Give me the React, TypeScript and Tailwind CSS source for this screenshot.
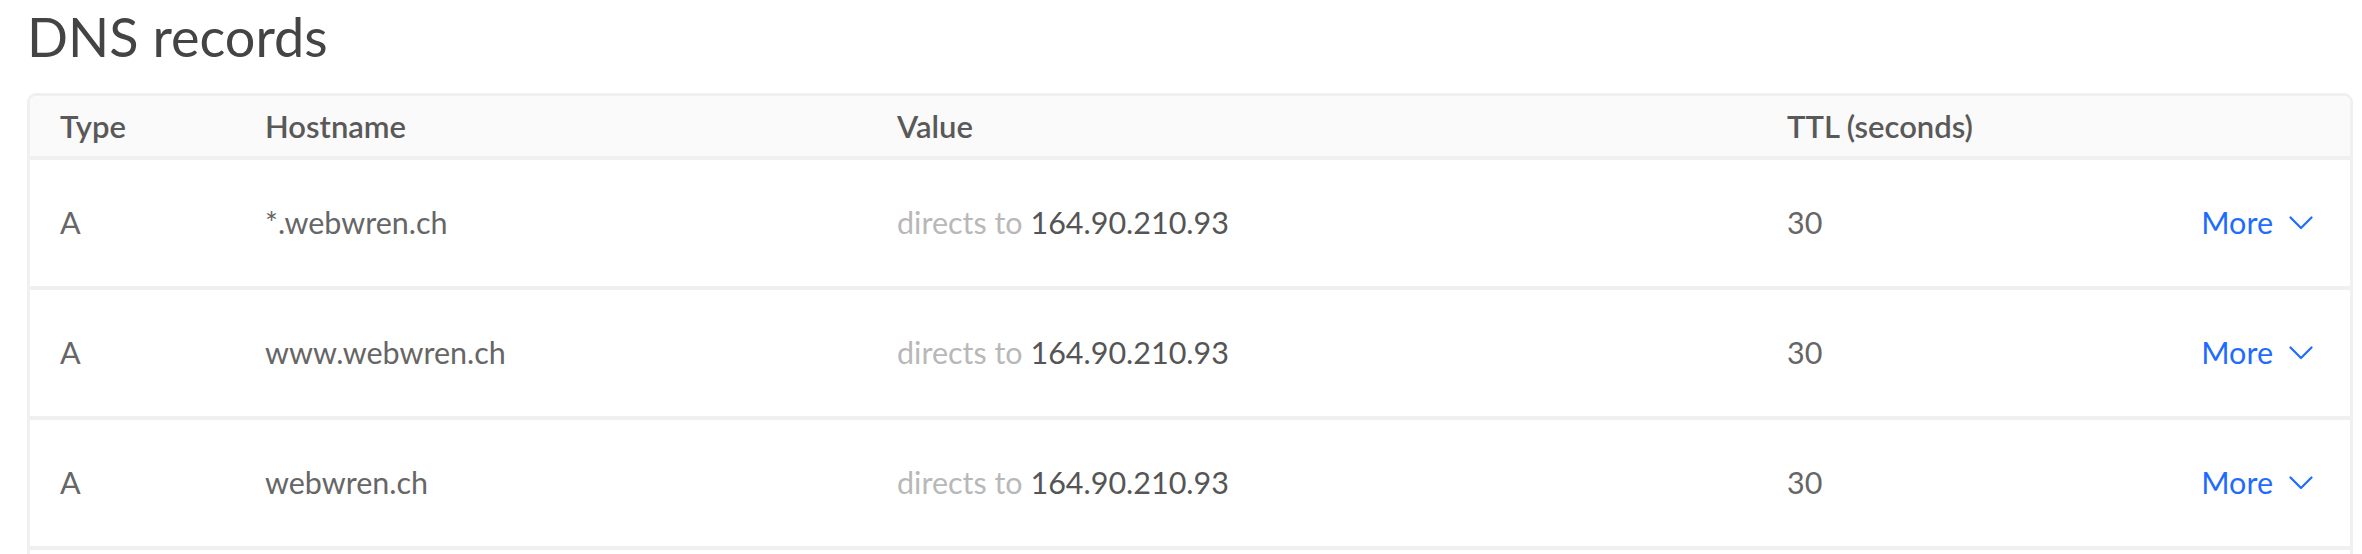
type DnsRecord = {
  type: string;
  hostname: string;
  value: string;
  ttl: number;
};

const records: DnsRecord[] = [
  { type: "A", hostname: "*.webwren.ch", value: "164.90.210.93", ttl: 30 },
  { type: "A", hostname: "www.webwren.ch", value: "164.90.210.93", ttl: 30 },
  { type: "A", hostname: "webwren.ch", value: "164.90.210.93", ttl: 30 },
];

// shared column template so header and rows line up
const cols = "grid grid-cols-[205px_632px_890px_1fr_auto] items-center pl-[30px] pr-[37px]";

function Chevron() {
  return (
    <svg width="24" height="14" viewBox="0 0 24 14" fill="none" stroke="currentColor" strokeWidth={2.2} strokeLinecap="round" strokeLinejoin="round">
      <path d="M1.5 1.5 L12 12 L22.5 1.5" />
    </svg>
  );
}

function RecordRow({ record }: { record: DnsRecord }) {
  return (
    <div className={`${cols} h-[130px] border-t-4 border-[#f0f0f0] bg-white text-[30.5px] text-[#666]`}>
      <span>{record.type}</span>
      <span>{record.hostname}</span>
      <span>
        <span className="text-[#b8b8b8]">directs to </span>
        <span className="text-[#555]">{record.value}</span>
      </span>
      <span>{record.ttl}</span>
      <button className="flex items-center gap-[16px] text-[#1f6bff]">
        More
        <Chevron />
      </button>
    </div>
  );
}

export default function App() {
  return (
    <div className="min-h-screen bg-white pl-[27px] pr-[9px] font-['Lato',sans-serif]">
      <h1 className="pt-[5px] text-[54px] leading-[64px] font-normal text-[#444]">DNS records</h1>

      <div className="mt-[24px] overflow-hidden rounded-[9px] border-[3px] border-[#f0f0f0]">
        <div className={`${cols} h-[60px] bg-[#fafafa] text-[31px] font-semibold text-[#595959]`}>
          <span>Type</span>
          <span>Hostname</span>
          <span>Value</span>
          <span>TTL (seconds)</span>
          <span />
        </div>
        {records.map((r, i) => (
          <RecordRow key={i} record={r} />
        ))}
        {/* next record starts below the fold */}
        <div className="h-[60px] border-t-4 border-[#f0f0f0] bg-white" />
      </div>
    </div>
  );
}
